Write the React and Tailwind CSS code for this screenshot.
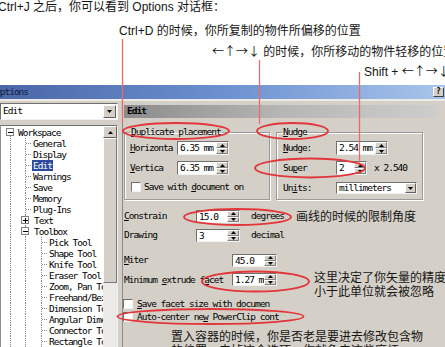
import React from "react";

const MONO = "font-['DejaVu_Sans_Mono',monospace] text-[9.5px] tracking-[-1px] text-black";
const CJK = "font-['Liberation_Sans','Noto_Sans_CJK_SC',sans-serif] text-[12px] text-[#151515]";
const ARR = "font-['Noto_Sans_CJK_SC',sans-serif]";

function Tri({ up }) {
  return (
    <svg width="5" height="3" viewBox="0 0 5 3" className="block">
      {up ? <path d="M2.5 0L5 3H0Z" fill="#000" /> : <path d="M0 0H5L2.5 3Z" fill="#000" />}
    </svg>
  );
}

function Spinner() {
  return (
    <div className="flex flex-col w-[12px] h-full shrink-0">
      <div className="flex-1 flex items-center justify-center bg-[#d4d0c8] border border-t-white border-l-white border-r-[#808080] border-b-[#808080]">
        <Tri up />
      </div>
      <div className="flex-1 flex items-center justify-center bg-[#d4d0c8] border border-t-white border-l-white border-r-[#808080] border-b-[#808080]">
        <Tri />
      </div>
    </div>
  );
}

function Field({ value, className }) {
  return (
    <div className={`flex bg-white border border-t-[#707070] border-l-[#707070] border-r-[#f2f2f2] border-b-[#f2f2f2] ${className}`}>
      <span className="flex-1 pl-[2px] leading-[11px] overflow-hidden whitespace-nowrap">{value}</span>
      <Spinner />
    </div>
  );
}

function Check() {
  return <div className="w-[10px] h-[10px] shrink-0 bg-white border border-t-[#707070] border-l-[#707070] border-r-[#f2f2f2] border-b-[#f2f2f2]" />;
}

function U({ children }) {
  return <span className="underline underline-offset-[1px]">{children}</span>;
}

const tree = [
  { t: "Workspace", l: 0, box: "-" },
  { t: "General", l: 1 },
  { t: "Display", l: 1 },
  { t: "Edit", l: 1, sel: true },
  { t: "Warnings", l: 1 },
  { t: "Save", l: 1 },
  { t: "Memory", l: 1 },
  { t: "Plug-Ins", l: 1 },
  { t: "Text", l: 1, box: "+" },
  { t: "Toolbox", l: 1, box: "-" },
  { t: "Pick Tool", l: 2 },
  { t: "Shape Tool", l: 2 },
  { t: "Knife Tool", l: 2 },
  { t: "Eraser Tool", l: 2 },
  { t: "Zoom, Pan Tool", l: 2 },
  { t: "Freehand/Bezier Tool", l: 2 },
  { t: "Dimension Tool", l: 2 },
  { t: "Angular Dimension Tool", l: 2 },
  { t: "Connector Tool", l: 2 },
  { t: "Rectangle Tool", l: 2 },
];

function TreeLines({ l, box }) {
  const w = l === 0 ? 17 : l === 1 ? (box ? 33 : 32) : 48;
  const cx = l === 0 ? 9 : 24;
  return (
    <svg width={w} height="11" className="shrink-0 block">
      <g stroke="#8a8a8a" strokeWidth="1" strokeDasharray="1 1" fill="none">
        <line x1="9.5" y1={l === 0 ? 9 : 0} x2="9.5" y2="11" />
        {l >= 1 && <line x1="24.5" y1="0" x2="24.5" y2="11" />}
        {l === 1 && !box && <line x1="25" y1="5.5" x2="31" y2="5.5" />}
        {l === 2 && <line x1="40.5" y1="0" x2="40.5" y2="11" />}
        {l === 2 && <line x1="41" y1="5.5" x2="47" y2="5.5" />}
      </g>
      {box && (
        <g>
          <rect x={cx - 3.5} y="1.5" width="7" height="7" fill="#fff" stroke="#808080" />
          <line x1={cx - 2} y1="5.5" x2={cx + 3} y2="5.5" stroke="#000" />
          {box === "+" && <line x1={cx + 0.5} y1="3" x2={cx + 0.5} y2="8" stroke="#000" />}
        </g>
      )}
    </svg>
  );
}

function Overlay() {
  const red = "#e2363a";
  return (
    <svg className="absolute inset-0 pointer-events-none" width="445" height="347">
      <g stroke={red} fill="none">
        <line x1="122.5" y1="39" x2="122.5" y2="123" strokeWidth="1.3" stroke="#e86a6a" />
        <line x1="259.5" y1="60" x2="259.5" y2="124" strokeWidth="1.3" stroke="#e86a6a" />
        <line x1="359.5" y1="72" x2="359.5" y2="163" strokeWidth="1.3" stroke="#e86a6a" />
        <ellipse cx="176" cy="131" rx="53" ry="8" strokeWidth="1.8" />
        <ellipse cx="292.5" cy="131" rx="35.5" ry="8" strokeWidth="1.8" />
        <ellipse cx="310" cy="168" rx="55" ry="9.5" strokeWidth="1.8" />
        <ellipse cx="237.5" cy="217" rx="53.5" ry="8" strokeWidth="1.8" />
        <ellipse cx="255.5" cy="281.5" rx="53.5" ry="10" strokeWidth="1.8" />
        <ellipse cx="210.5" cy="316.5" rx="93" ry="7.5" strokeWidth="1.8" />
      </g>
    </svg>
  );
}

export default function App() {
  return (
    <div className="relative w-[445px] h-[347px] overflow-hidden bg-white">
      {/* annotation header */}
      <div className={`h-[85px] ${CJK} leading-[14px]`}>
        <div className="-ml-[2px] whitespace-nowrap">Ctrl+J 之后，你可以看到 Options 对话框：</div>
        <div className="ml-[119px] mt-[10px] whitespace-nowrap">Ctrl+D 的时候，你所复制的物件所偏移的位置</div>
        <div className="ml-[212px] mt-[6px] whitespace-nowrap">
          <span className={ARR}>←↑→↓</span> 的时候，你所移动的物件轻移的位置
        </div>
        <div className="ml-[364px] mt-[5px] whitespace-nowrap">
          Shift + <span className={ARR}>←↑→↓</span> 的时候
        </div>
      </div>

      {/* dialog */}
      <div className={`h-[262px] bg-[#d4d0c8] flex flex-col ${MONO}`}>
        <div className="h-[14px] shrink-0 flex items-center justify-between bg-gradient-to-r from-[#4a67a8] via-[#6c90d0] to-[#a9c5ea]">
          <span className="-ml-[5px] text-[#0d1a3a] leading-[14px]">Options</span>
          <div className="w-[11px] h-[10px] mr-[1px] bg-[#d4d0c8] border border-t-white border-l-white border-r-[#404040] border-b-[#404040] flex items-center justify-center text-[8px] font-bold leading-none tracking-normal">?</div>
        </div>
        <div className="h-[2px] shrink-0 bg-[#ecebe6]" />

        <div className="flex flex-1 min-h-0">
          {/* left column */}
          <div className="w-[118px] shrink-0 flex flex-col">
            <div className="mt-[2px] h-[17px] flex items-center bg-white border border-t-[#707070] border-l-[#707070] border-r-[#f2f2f2] border-b-[#f2f2f2]">
              <span className="flex-1 pl-[2px]">Edit</span>
              <div className="w-[13px] h-[13px] mr-[1px] flex items-center justify-center bg-[#d4d0c8] border border-t-white border-l-white border-r-[#606060] border-b-[#606060]">
                <Tri />
              </div>
            </div>
            <div className="mt-[5px] flex-1 min-h-0 flex bg-white border border-t-[#707070] border-l-[#909090] border-r-[#f0f0f0] border-b-0 overflow-hidden">
              <div className="flex-1 min-w-0 pt-[1px] overflow-hidden">
                {tree.map((r) => (
                  <div key={r.t} className="flex h-[11px] items-center whitespace-nowrap leading-[11px]">
                    <TreeLines l={r.l} box={r.box} />
                    <span className={r.sel ? "bg-[#2b4a9c] text-white px-[1px] -ml-[1px]" : ""}>{r.t}</span>
                  </div>
                ))}
              </div>
              <div className="w-[14px] shrink-0 flex flex-col">
                <div className="h-[12px] flex items-center justify-center bg-[#d4d0c8] border border-t-white border-l-white border-r-[#606060] border-b-[#606060]">
                  <Tri up />
                </div>
                <div className="h-[145px] bg-[#d4d0c8] border border-t-white border-l-white border-r-[#7a7a7a] border-b-[#7a7a7a]" />
                <div className="flex-1 bg-[#ebeae6]" />
              </div>
            </div>
          </div>

          {/* right panel */}
          <div className="ml-[4px] flex-1 flex flex-col border-l border-[#8a8a8a]">
            <div className="mt-[4px] ml-[1px] w-[313px] h-[13px] rounded-r-[3px] flex items-center bg-gradient-to-r from-[#8c8c8c] via-[#b6b6b6] to-[#cdcdcd]">
              <span className="ml-[3px] font-bold">Edit</span>
            </div>

            <div className="mt-[9px] flex items-start">
              <fieldset className="ml-[1px] w-[146px] h-[73px] px-[5px] border border-[#9a9a9a] shadow-[inset_1px_1px_0_#fff,1px_1px_0_#fff]">
                <legend className="px-[1px] leading-[10px]"><U>D</U>uplicate placement</legend>
                <div className="flex flex-col">
                  <div className="mt-[4px] flex items-center h-[14px]">
                    <span className="w-[47px]"><U>H</U>orizonta</span>
                    <Field value="6.35 mm" className="w-[52px] h-[14px]" />
                  </div>
                  <div className="mt-[6px] flex items-center h-[14px]">
                    <span className="w-[47px]"><U>V</U>ertica</span>
                    <Field value="6.35 mm" className="w-[52px] h-[14px]" />
                  </div>
                  <div className="mt-[7px] flex items-center h-[10px]">
                    <div className="ml-[1px]"><Check /></div>
                    <span className="ml-[3px] whitespace-nowrap leading-[10px]">Save with <U>d</U>ocument on</span>
                  </div>
                </div>
              </fieldset>

              <fieldset className="ml-[6px] w-[147px] h-[73px] px-[5px] border border-[#9a9a9a] shadow-[inset_1px_1px_0_#fff,1px_1px_0_#fff]">
                <legend className="px-[1px] leading-[10px]"><U>N</U>udge</legend>
                <div className="flex flex-col">
                  <div className="mt-[4px] flex items-center h-[14px]">
                    <span className="w-[54px] pl-[1px]"><U>N</U>udge:</span>
                    <Field value="2.54 mm" className="w-[52px] h-[14px]" />
                  </div>
                  <div className="mt-[6px] flex items-center h-[14px]">
                    <span className="w-[54px] pl-[1px]">Su<U>p</U>er</span>
                    <Field value="2" className="w-[31px] h-[14px]" />
                    <span className="ml-[7px]">x 2.540</span>
                  </div>
                  <div className="mt-[7px] flex items-center h-[12px]">
                    <span className="w-[54px] pl-[1px]">Un<U>i</U>ts:</span>
                    <div className="w-[81px] h-[12px] flex items-center bg-white border border-t-[#707070] border-l-[#707070] border-r-[#f2f2f2] border-b-[#f2f2f2]">
                      <span className="flex-1 pl-[2px] leading-[10px]">millimeters</span>
                      <div className="w-[11px] h-[10px] flex items-center justify-center bg-[#d4d0c8] border border-t-white border-l-white border-r-[#606060] border-b-[#606060]">
                        <Tri />
                      </div>
                    </div>
                  </div>
                </div>
              </fieldset>
            </div>

            {/* Constrain */}
            <div className="mt-[10px] flex items-center h-[13px] pl-[1px] whitespace-nowrap">
              <span className="w-[72px]"><U>C</U>onstrain</span>
              <Field value="15.0" className="w-[44px] h-[13px]" />
              <span className="ml-[11px]">degrees</span>
              <span className={`ml-[12px] ${CJK} tracking-normal leading-[14px]`}>画线的时候的限制角度</span>
            </div>
            {/* Drawing */}
            <div className="mt-[6px] flex items-center h-[13px] pl-[1px] whitespace-nowrap">
              <span className="w-[72px]">Drawing</span>
              <Field value="3" className="w-[44px] h-[13px]" />
              <span className="ml-[11px]">decimal</span>
            </div>
            {/* Miter */}
            <div className="mt-[12px] flex items-center h-[13px] pl-[1px] whitespace-nowrap">
              <span className="w-[108px]"><U>M</U>iter</span>
              <Field value="45.0" className="w-[45px] h-[13px]" />
            </div>
            {/* Minimum extrude facet */}
            <div className="mt-[4px] flex items-start h-[28px] pl-[1px] whitespace-nowrap">
              <span className="w-[108px] mt-[2px] leading-[13px]">Minimum <U>e</U>xtrude f<U>a</U>cet</span>
              <Field value="1.27 mm" className="mt-[2px] w-[45px] h-[13px]" />
              <div className={`ml-[37px] ${CJK} tracking-normal leading-[14px]`}>
                <div>这里决定了你矢量的精度</div>
                <div>小于此单位就会被忽略</div>
              </div>
            </div>
            {/* Save facet */}
            <div className="flex items-center h-[10px] whitespace-nowrap">
              <Check />
              <span className="ml-[4px] leading-[10px]"><U>S</U>ave facet size with documen</span>
            </div>
            {/* Auto-center */}
            <div className="mt-[3px] flex items-center h-[10px] whitespace-nowrap">
              <Check />
              <span className="ml-[4px] leading-[10px]">Auto-center ne<U>w</U> PowerClip cont</span>
            </div>
            <div className={`mt-[8px] ml-[48px] ${CJK} tracking-normal leading-[14px] whitespace-nowrap`}>
              <div>置入容器的时候，你是否老是要进去修改包含物</div>
              <div>的位置，去掉这个选项，你就免去这些麻烦</div>
            </div>
          </div>
        </div>
      </div>

      <Overlay />
    </div>
  );
}
